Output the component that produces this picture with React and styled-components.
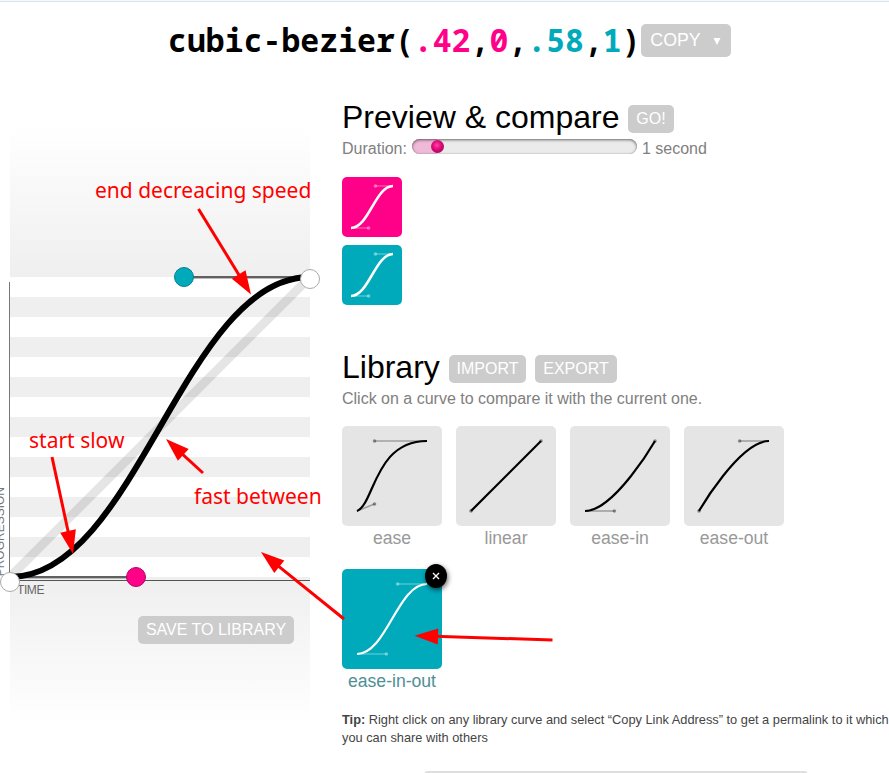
import React from "react";
import styled, { createGlobalStyle, css } from "styled-components";

const GlobalStyle = createGlobalStyle`
  *, *::before, *::after { box-sizing: border-box; }
  body { margin: 0; background: #fff; font-family: "Liberation Sans", Arial, sans-serif; }
`;

const PINK = "#ff0088";
const TEAL = "#00aabb";

const Page = styled.div`
  position: relative;
  width: 889px;
  height: 773px;
  overflow: hidden;
  border-top: 1px solid #f6f9fb;
  &::before {
    content: "";
    display: block;
    height: 1px;
    background: #dbe3e9;
  }
`;

const Header = styled.header`
  display: flex;
  align-items: flex-start;
  padding: 16px 0 0 168px;
  height: 95px;
`;

const Formula = styled.h1`
  display: flex;
  margin: 0;
  width: 473px;
  height: 44px;
  font: bold 31.5px/44px "Noto Sans Mono", "Noto Sans", sans-serif;
  white-space: nowrap;
`;

const Char = styled.span`
  flex: 0 0 18.92px;
  text-align: center;
  color: ${(p) => p.$color || "#000"};
`;

const Button = styled.button`
  display: inline-flex;
  align-items: center;
  justify-content: center;
  width: ${(p) => p.$w}px;
  height: 28px;
  padding: 0;
  border: 0;
  border-radius: 5px;
  background: #ccc;
  color: #fff;
  font: 16px/18px "Liberation Sans", Arial, sans-serif;
  white-space: nowrap;
  ${(p) =>
    p.$large &&
    css`
      height: 33px;
      margin-top: 6px;
      padding: 0 1px 1px 0;
      font-size: 17.8px;
      gap: 12px;
      svg { margin-top: 2px; }
    `}
`;

const Main = styled.main`
  display: flex;
  gap: 32px;
`;

const GraphColumn = styled.section`
  position: relative;
  flex: 0 0 310px;
  height: 676px;
  padding: 30px 0 0 10px;
`;

const Fade = styled.div`
  height: 150px;
  background: linear-gradient(${(p) => (p.$up ? "to top" : "to bottom")}, #efefef, #fff);
  ${(p) =>
    !p.$up &&
    css`
      display: flex;
      justify-content: flex-end;
      align-items: flex-start;
      padding: 39px 16px 0 0;
    `}
`;

const Stripes = styled.div`
  height: 300px;
  background: repeating-linear-gradient(to bottom, #fff 0 20px, #efefef 20px 40px);
`;

const Drawing = styled.svg`
  position: absolute;
  left: 0;
  top: ${(p) => p.$top}px;
  pointer-events: none;
`;

const AxisLabel = styled.span`
  position: absolute;
  font-size: 12px;
  line-height: 14px;
  color: #666;
  ${(p) =>
    p.$vertical
      ? css`
          left: -7px;
          bottom: 197px;
          writing-mode: vertical-rl;
          transform: rotate(180deg);
          color: #777;
        `
      : css`
          left: 17px;
          top: 486px;
          letter-spacing: -0.4px;
        `}
`;

const Content = styled.section`
  flex: 1 0 547px;
`;

const TitleRow = styled.div`
  display: flex;
  align-items: flex-start;
  gap: 9px;
  height: 39px;
  padding-top: ${(p) => p.$shift || 0}px;
`;

const Title = styled.h2`
  margin: 0;
  font: 32px/38px "Liberation Sans", Arial, sans-serif;
  color: #000;
  width: ${(p) => p.$w}px;
  white-space: nowrap;
  & ~ button { margin-top: 7px; }
`;

const Hint = styled.div`
  display: flex;
  height: 24px;
  font-size: 16px;
  line-height: ${(p) => p.$line || 24}px;
  color: #808080;
  white-space: nowrap;
`;

const Slider = styled.div`
  width: 225px;
  height: 15px;
  margin: 3px 5px 0 5px;
  padding: 0 0 0 19px;
  border-radius: 8px;
  background: linear-gradient(to right, #efb9d8 0 25px, #ebebeb 25px);
  box-shadow: inset 0 1px 3px rgba(0, 0, 0, 0.55), inset 0 0 1px rgba(0, 0, 0, 0.25);
`;

const Knob = styled.div`
  width: 13px;
  height: 13px;
  margin-top: 1px;
  border-radius: 50%;
  background: radial-gradient(circle at 45% 40%, #ff48a8 0, #e6107f 35%, #a60059 80%);
`;

const PreviewStack = styled.div`
  display: flex;
  flex-direction: column;
  gap: 8px;
  margin: 17px 0 43px;
`;

const Tile = styled.div`
  position: relative;
  width: ${(p) => p.$size}px;
  height: ${(p) => p.$size}px;
  border-radius: 5px;
  background: ${(p) => p.$bg};
  color: ${(p) => p.$fg};
  svg { display: block; }
`;

const Library = styled.div`
  display: grid;
  grid-template-columns: repeat(4, 100px);
  column-gap: 14px;
  row-gap: 18px;
  margin-top: 15px;
`;

const Label = styled.div`
  height: 25px;
  font-size: 17.6px;
  line-height: 25px;
  text-align: center;
  color: ${(p) => (p.$active ? "#4f9095" : "#999")};
`;

const Remove = styled.div`
  position: absolute;
  top: -5px;
  right: -5px;
  display: flex;
  align-items: center;
  justify-content: center;
  width: 22px;
  height: 24px;
  border-radius: 50%;
  background: #000;
  box-shadow: 1px 2px 5px rgba(0, 0, 0, 0.6);
`;

const Tip = styled.p`
  margin: 17px 0 0;
  font-size: 12.8px;
  line-height: 18px;
  color: #444;
  white-space: nowrap;
`;

const NextPanel = styled.div`
  width: 384px;
  height: 20px;
  margin: 24px 0 0 82px;
  border: 2px solid #dedede;
  border-radius: 4px;
`;

const Note = styled.span`
  position: absolute;
  left: ${(p) => p.$x}px;
  top: ${(p) => p.$y}px;
  font: 21px/28px "Noto Sans", sans-serif;
  color: #ff0000;
  white-space: nowrap;
`;

function Curve({ size, points, weight = 2.2, dot = 1.8 }) {
  const pad = size * 0.15;
  const s = size * 0.7;
  const X = (v) => pad + v * s;
  const Y = (v) => size - pad - v * s;
  const [a, b, c, d] = points;
  return (
    <svg width={size} height={size} fill="none" stroke="currentColor">
      <g strokeOpacity="0.3" strokeWidth={1.6}>
        <path d={`M${X(0)} ${Y(0)}L${X(a)} ${Y(b)}M${X(1)} ${Y(1)}L${X(c)} ${Y(d)}`} />
      </g>
      <g fill="currentColor" fillOpacity="0.4" stroke="none">
        <circle cx={X(a)} cy={Y(b)} r={dot} />
        <circle cx={X(c)} cy={Y(d)} r={dot} />
      </g>
      <path strokeWidth={weight} d={`M${X(0)} ${Y(0)}C${X(a)} ${Y(b)} ${X(c)} ${Y(d)} ${X(1)} ${Y(1)}`} />
    </svg>
  );
}

function Arrow({ from, to }) {
  const angle = (Math.atan2(to[1] - from[1], to[0] - from[0]) * 180) / Math.PI;
  const length = Math.hypot(to[0] - from[0], to[1] - from[1]);
  return (
    <g transform={`translate(${from[0]} ${from[1]}) rotate(${angle})`} fill="#f00">
      <rect x="0" y="-1.5" width={length - 20} height="3" />
      <polygon points={`${length},0 ${length - 23.5},-8 ${length - 23.5},8`} />
    </g>
  );
}

const formula = [
  ["cubic-bezier("],
  [".42", PINK],
  [","],
  ["0", PINK],
  [","],
  [".58", TEAL],
  [","],
  ["1", TEAL],
  [")"],
];

const curves = [
  ["ease", [0.25, 0.1, 0.25, 1]],
  ["linear", [0, 0, 1, 1]],
  ["ease-in", [0.42, 0, 1, 1]],
  ["ease-out", [0, 0, 0.58, 1]],
  ["ease-in-out", [0.42, 0, 0.58, 1]],
];

const arrows = [
  { from: [198.5, 209], to: [251, 294.5] },
  { from: [52, 457], to: [73, 554] },
  { from: [203, 473], to: [166, 439] },
  { from: [344, 619], to: [261, 552] },
  { from: [552.5, 640], to: [414.5, 635.7] },
];

export default function App() {
  return (
    <Page>
      <GlobalStyle />
      <Header>
        <Formula>
          {formula.flatMap(([text, color], i) =>
            [...text].map((ch, j) => (
              <Char key={`${i}-${j}`} $color={color}>
                {ch}
              </Char>
            ))
          )}
        </Formula>
        <Button $w={90} $large>
          COPY
          <svg width="8" height="7">
            <path d="M0.5 0H7.5L4 7Z" fill="#fff" />
          </svg>
        </Button>
      </Header>
      <Main>
        <GraphColumn>
          <Fade $up />
          <Stripes />
          <Fade>
            <Button $w={156}>SAVE TO LIBRARY</Button>
          </Fade>
          <AxisLabel $vertical>PROGRESSION</AxisLabel>
          <AxisLabel>TIME</AxisLabel>
          <Drawing $top={-97} width="330" height="773">
            <path d="M10 580.5H310" stroke="#555" />
            <path d="M9.5 282V580" stroke="#777" />
            <path d="M10 577L310 277" stroke="#000" strokeOpacity="0.1" strokeWidth="9" />
            <path d="M10 578H136M184 278H310" stroke="#bbb" strokeWidth="2" />
            <path d="M10 577H136M184 277H310" stroke="#606060" strokeWidth="2" />
            <path d="M10 577C136 577 184 277 310 277" fill="none" stroke="#000" strokeWidth="6" />
            <circle cx="184" cy="277" r="9.5" fill={TEAL} stroke="#077f8b" />
            <circle cx="136" cy="577" r="9.5" fill={PINK} stroke="#b20766" />
            <circle cx="10" cy="582" r="9.5" fill="#fff" stroke="#aaa" />
            <circle cx="310" cy="279" r="9.5" fill="#fff" stroke="#aaa" />
          </Drawing>
        </GraphColumn>
        <Content>
          <TitleRow $shift={1}>
            <Title $w={277}>Preview &amp; compare</Title>
            <Button $w={46}>GO!</Button>
          </TitleRow>
          <Hint $line={25}>
            Duration:
            <Slider>
              <Knob />
            </Slider>
            1 second
          </Hint>
          <PreviewStack>
            {[PINK, TEAL].map((bg) => (
              <Tile key={bg} $size={60} $bg={bg} $fg="#fff">
                <Curve size={60} points={[0.42, 0, 0.58, 1]} weight={2.5} />
              </Tile>
            ))}
          </PreviewStack>
          <TitleRow>
            <Title $w={98}>Library</Title>
            <Button $w={77}>IMPORT</Button>
            <Button $w={82}>EXPORT</Button>
          </TitleRow>
          <Hint>Click on a curve to compare it with the current one.</Hint>
          <Library>
            {curves.map(([name, points]) => {
              const active = name === "ease-in-out";
              return (
                <div key={name}>
                  <Tile $size={100} $bg={active ? TEAL : "#e5e5e5"} $fg={active ? "#fff" : "#000"}>
                    <Curve size={100} points={points} />
                    {active && (
                      <Remove>
                        <svg width="8" height="8" stroke="#fff" strokeWidth="1.3">
                          <path d="M1 1L7 7M7 1L1 7" />
                        </svg>
                      </Remove>
                    )}
                  </Tile>
                  <Label $active={active}>{name}</Label>
                </div>
              );
            })}
          </Library>
          <Tip>
            <b>Tip:</b> Right click on any library curve and select “Copy Link Address” to get a permalink to it which
            <br />
            you can share with others
          </Tip>
          <NextPanel />
        </Content>
      </Main>
      <Note $x={95} $y={175}>end decreacing speed</Note>
      <Note $x={29} $y={425}>start slow</Note>
      <Note $x={194} $y={481}>fast between</Note>
      <Drawing $top={-1} width="889" height="773">
        {arrows.map((a, i) => (
          <Arrow key={i} {...a} />
        ))}
      </Drawing>
    </Page>
  );
}
